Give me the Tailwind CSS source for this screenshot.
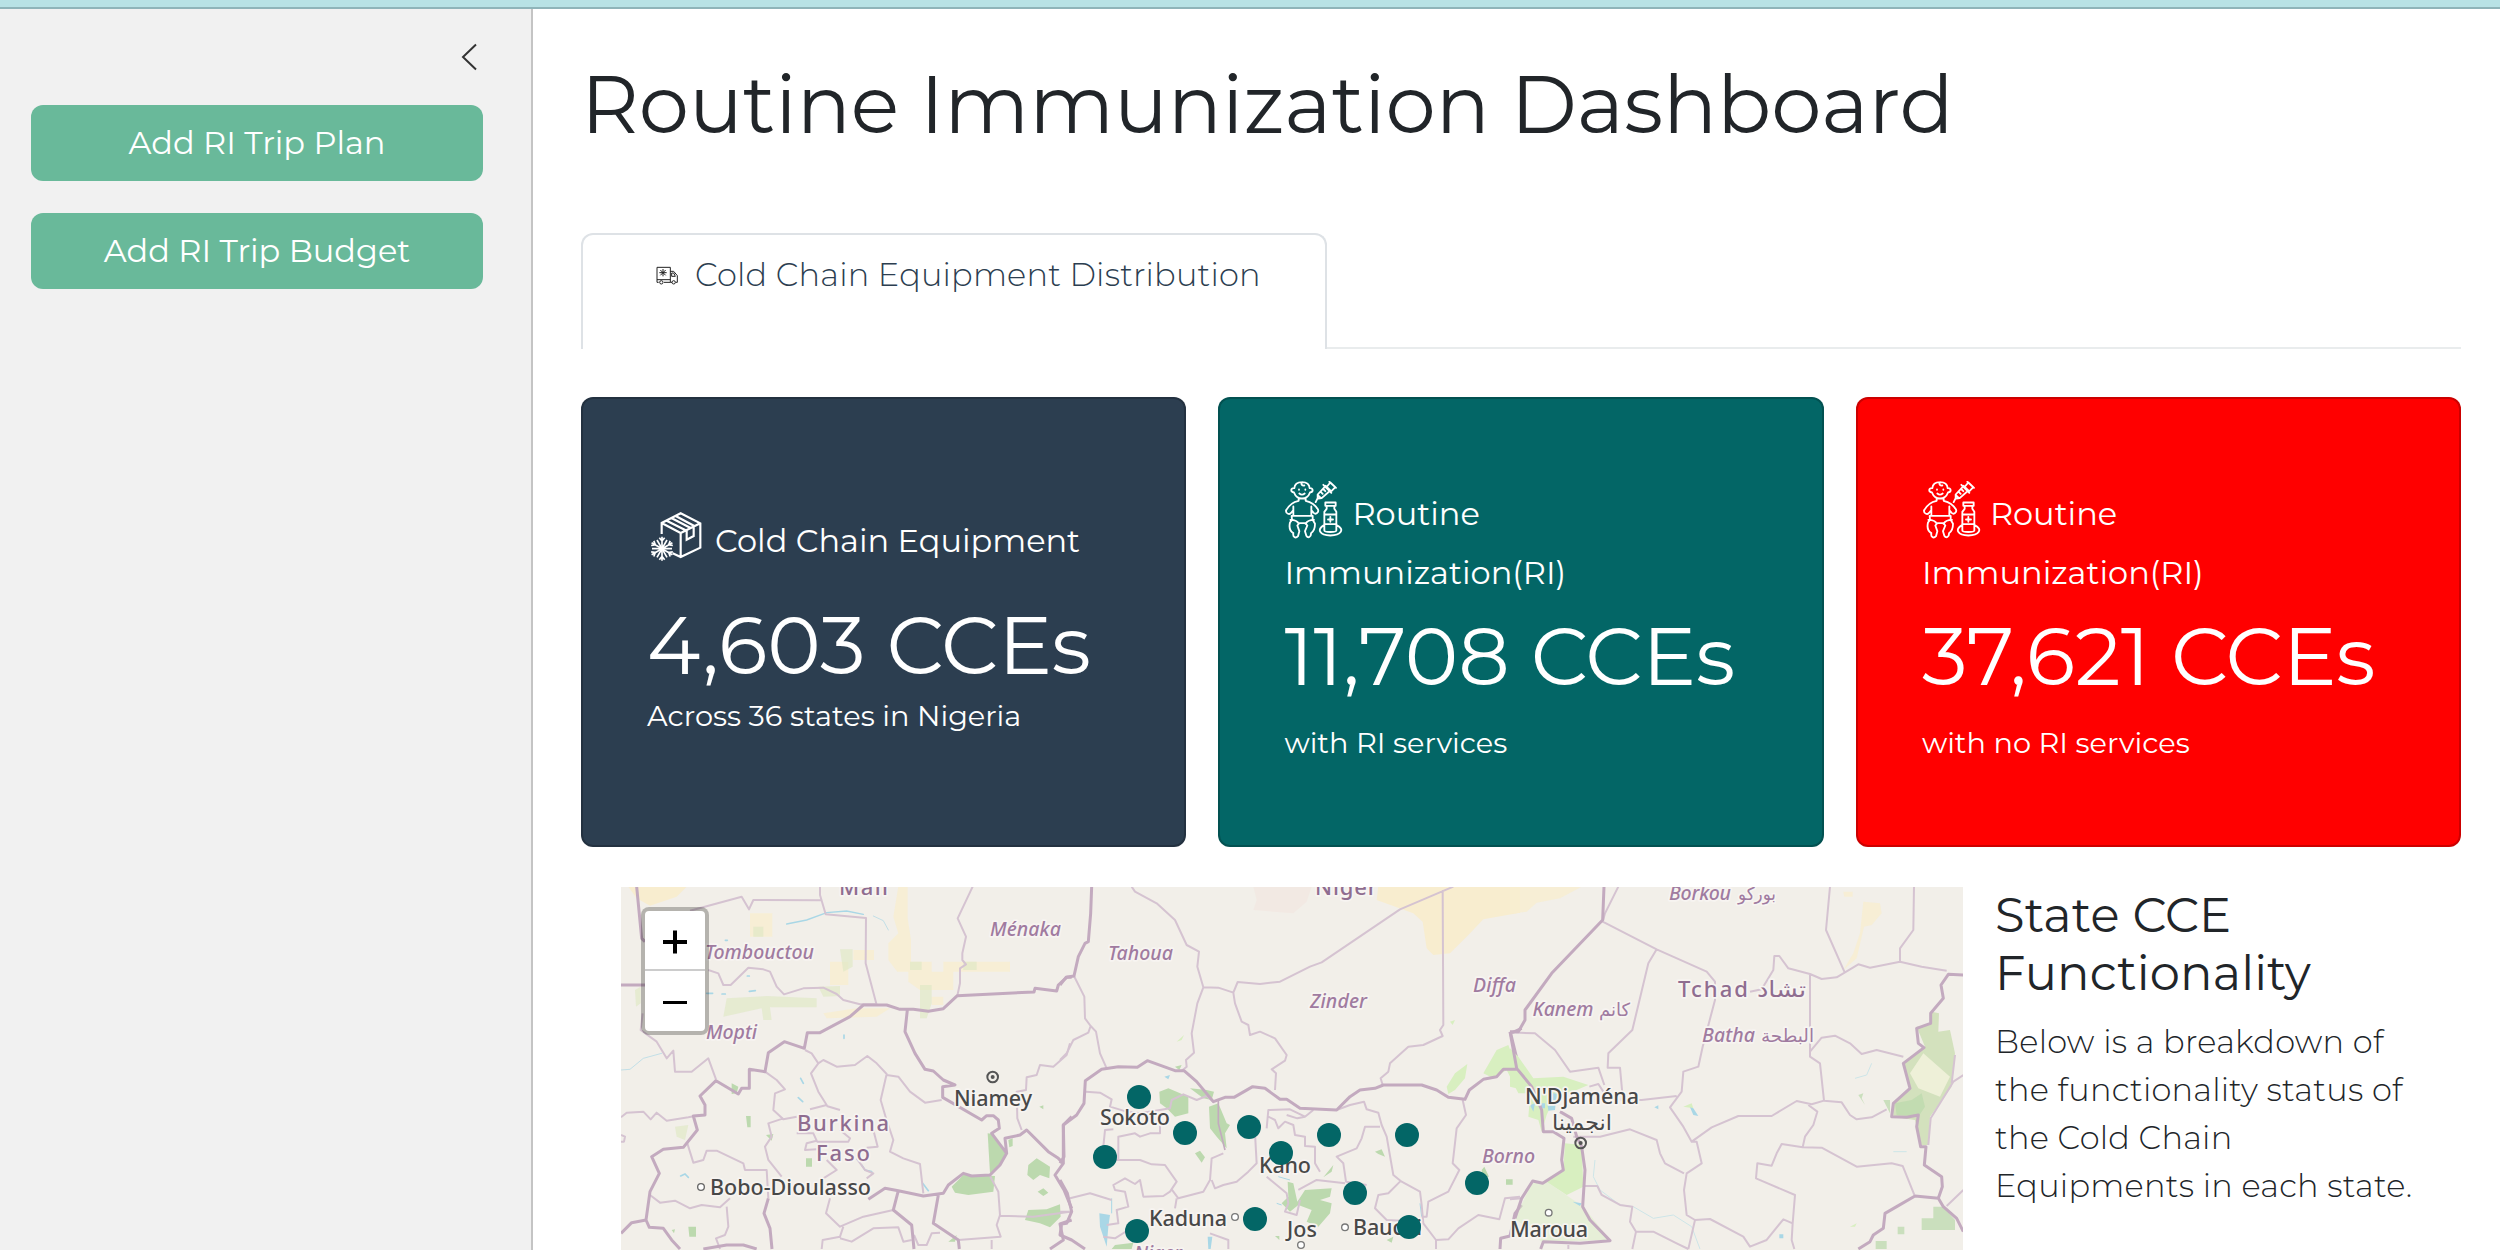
<!DOCTYPE html>
<html lang="en">
<head>
<meta charset="utf-8">
<title>Routine Immunization Dashboard</title>
<script src="https://cdn.jsdelivr.net/npm/@tailwindcss/browser@4"></script>
</head>
<body class="h-[1250px] w-[2500px] overflow-hidden bg-white font-[Montserrat,Inter,sans-serif] text-[#212529]">
<div class="flex h-full flex-col">
  <header class="h-[9px] shrink-0 border-b-2 border-[#8fb4b9] bg-[#b8e2e5]"></header>
  <div class="flex min-h-0 flex-1">
    <aside class="flex w-[533px] shrink-0 flex-col border-r-2 border-[#c4c4c4] bg-[#f1f1f1] pl-[31px] pr-[48px] pt-[34px]">
      <svg class="mr-[6px] h-[28px] w-[16px] self-end" viewBox="0 0 16 28" fill="none" stroke="#333" stroke-width="2"><path d="M15 1.500 2 14l13 12.500"/></svg>
      <button class="mt-[34px] h-[76px] rounded-xl bg-[#69b99a] text-[32px] text-white">Add RI Trip Plan</button>
      <button class="mt-8 h-[76px] rounded-xl bg-[#69b99a] text-[32px] text-white">Add RI Trip Budget</button>
    </aside>
    <main class="flex min-w-0 flex-1 flex-col pl-12 pr-[39px] pt-12">
      <h1 class="text-[80px] leading-[96px]">Routine Immunization Dashboard</h1>
      <div class="mt-[80px] flex h-[116px]">
        <div class="flex w-[746px] items-start rounded-t-xl border-2 border-b-0 border-[#dee2e6] pl-[72px] pt-[16px]">
          <svg class="mt-[14px] h-[21px] w-6" viewBox="30 28 72 63" fill="none" stroke="#222" stroke-width="3"><path d="M41 80H36V35H76V80H57M76 47H86L97 60V80H92M76 80H81M36 72H76M80 52H86L91 62H80Z"/><circle cx="49" cy="80" r="5"/><circle cx="86" cy="80" r="5"/><path d="M54 40V62M43 51H65M46 43 62 59M62 43 46 59"/></svg>
          <span class="pl-[16px] text-[32px] font-light leading-[48px] tracking-[0.190px] text-[#2c3e50]">Cold Chain Equipment Distribution</span>
        </div>
        <div class="flex-1 border-b-2 border-[#e9eced]"></div>
      </div>
      <section class="mt-[48px] grid h-[450px] shrink-0 grid-cols-3 gap-[32.400px] text-white">
        <article class="rounded-xl border-2 border-black/20 bg-[#2c3e50] pl-[64px] pt-[113px]">
          <div class="flex h-[58px] items-center gap-2 text-[32px]">
            <svg class="h-[58px] w-[60px]" viewBox="21 36 180 174" fill="none" stroke="#fff" stroke-width="6.500"><path d="M65 102V69L122 40 181 70V143L122 171 98 160M65 69 122 99 181 70M122 99V171M80 62 137 91M94 54 152 84M107 48 163 78M140 92V119L161 108V82"/><g id="flake" stroke-width="5"><path id="arm" d="M66 146V110M58 113 66 123 74 113M66 146 81 120"/><use href="#arm" transform="rotate(60 66 146)"/><use href="#arm" transform="rotate(120 66 146)"/><use href="#arm" transform="rotate(180 66 146)"/><use href="#arm" transform="rotate(240 66 146)"/><use href="#arm" transform="rotate(300 66 146)"/></g></svg>
            <span>Cold Chain Equipment</span>
          </div>
          <div class="mt-[27px] text-[80.700px] leading-[96px]">4,603 CCEs</div>
          <div class="mt-px text-[28.800px] leading-[44px]">Across 36 states in Nigeria</div>
        </article>
        <article class="rounded-xl border-2 border-black/20 bg-[#036666] pl-[64px] pt-[82px]">
          <div class="flex h-[66px] items-center gap-2 text-[32px]">
            <svg class="h-[66px] w-[60px]" viewBox="42 31.500 180 198" fill="none" stroke="#fff" stroke-width="5.500" stroke-linejoin="round" stroke-linecap="round"><g id="baby"><path d="M73 53C74 40 83 35 96 35S118 40 119 53C129 52 132 64 120 66C116 77 109 84 96 84S76 77 72 66C60 64 62 52 73 53ZM96 35C92 42 97 46 103 45M87 57V58M106 57V58M88 69Q96 76 104 69M86 84V91C67 95 56 105 48 120C47 130 59 134 64 126L70 119V136H124V119L131 127C139 134 147 124 144 117C136 103 124 95 107 91V84M70 119V108M124 119V108M65 136H128V148L135 160C135 174 133 182 123 188C124 200 114 204 109 196L105 182 112 165 106 158H88L82 165 88 182 84 197C76 205 68 199 70 188C58 181 57 169 60 156L66 148ZM61 148Q82 148 86 160M132 148Q112 148 107 160"/><path d="M137 95 143 83 143 72 167 46 181 60 155 83 145 84M160 43 184 67M171 48 181 36 196 50 185 61M178 34 198 52M153 65 158 70M161 57 166 62M146 76 152 82"/><path d="M166 96H197V106H166ZM170 106V115L163 124V180C163 186 199 186 199 180V124L193 115V106M163 132H199M163 161H199M181 139V154M174 147H189M162 164C139 176 149 195 181 195S226 176 200 164"/></g></svg>
            <span>Routine</span>
          </div>
          <div class="text-[32px] leading-[52px]">Immunization(RI)</div>
          <div class="mt-[9px] text-[80.700px] leading-[96px]">11,708 CCEs</div>
          <div class="mt-[17px] text-[28.800px] leading-[44px]">with RI services</div>
        </article>
        <article class="rounded-xl border-2 border-black/20 bg-[#ff0000] pl-[64px] pt-[82px]">
          <div class="flex h-[66px] items-center gap-2 text-[32px]">
            <svg class="h-[66px] w-[60px]" viewBox="42 31.500 180 198" fill="none" stroke="#fff" stroke-width="5.500" stroke-linejoin="round" stroke-linecap="round"><use href="#baby"/></svg>
            <span>Routine</span>
          </div>
          <div class="text-[32px] leading-[52px]">Immunization(RI)</div>
          <div class="mt-[9px] text-[80.700px] leading-[96px]">37,621 CCEs</div>
          <div class="mt-[17px] text-[28.800px] leading-[44px]">with no RI services</div>
        </article>
      </section>
      <section class="mt-10 flex min-h-0 flex-1 pl-10">
        <div class="relative w-[1342px] shrink-0 overflow-hidden bg-[#f2efe9]">
          <svg class="block h-[363px] w-[1342px]" viewBox="621 887 1342 363" font-family="'Noto Sans','DejaVu Sans',sans-serif">
            <!-- west: Mali, Burkina Faso -->
            <g transform="translate(610 870) scale(.33333)">
              <g fill="#f8edcf"><path d="M55 50H230L200 80 120 107 80 85Z"/><path d="M420 130H487V200H420ZM865 50H893V145L903 210V305H862L835 270V220L865 190 850 140ZM660 275H715V345H660ZM895 275H965V305H1030V360H930L895 335ZM1000 275H1200V305H1000ZM640 430 740 415H840L800 440 650 445ZM730 240H792V270H730ZM965 380H1000V405H965Z" opacity=".8"/></g>
              <g fill="#dfe8c4" opacity=".65"><path d="M690 238H728V290L700 305ZM350 385 470 378 620 385V412H480L485 450H460L455 415 340 440ZM625 350 690 348V378L640 380ZM930 345H965V400L950 445 930 445ZM75 360 92 350V400L78 410ZM430 170H460V200H430ZM900 275H935V300H900ZM1060 275H1100V300H1060ZM195 770 235 765 225 810 200 800Z"/></g>
              <g fill="#bcd9ae"><path d="M1133 790 1148 792 1192 850 1170 888 1140 910Z"/><path d="M1025 950 1060 915 1155 918 1150 965 1075 975 1035 968Z"/><path d="M1255 885 1280 865 1320 890 1318 925 1290 915 1270 930 1252 915ZM1283 965 1300 955 1315 968 1300 978ZM1245 1050 1255 1020 1310 1018 1350 1003 1352 1040 1320 1072 1290 1060ZM235 1070H258V1100H238ZM1015 1115 1040 1095 1035 1115ZM1195 810 1208 805V828L1198 832ZM1288 710 1300 706V718ZM365 640 385 650 380 670 365 672ZM408 738H422V772H412ZM468 795 490 792 485 812ZM588 865H606V890H588ZM185 1080 195 1078 192 1090Z"/></g>
              <g fill="none" stroke="#a9d7e6" stroke-width="5" stroke-linecap="round"><path d="M530 162 590 150 650 128 710 123 760 133" stroke-width="4"/><path d="M790 138 820 152 835 180" stroke-width="2"/><path d="M33 600 60 598 100 565 155 550" stroke-width="2"/><path d="M290 370H308M336 372H346M418 364 436 362M412 318H418M346 211H352M565 683 578 695M212 918 225 912 235 922M755 885 765 900 785 905M938 940 955 962M572 625 580 640M702 495V505"/></g>
              <g fill="none" stroke="#d5c3d1" stroke-width="6" stroke-linejoin="round"><path d="M240 122 395 80 417 118 430 90 635 91M630 50V75L647 133 768 144 767 280 800 405M1088 50 1043 145 1068 200 1057 250V270L1068 283 1050 295V340L1042 377M295 300 325 310 340 345H362L415 293 460 298 480 305 500 350 522 373 580 355 640 353 680 372 700 390 750 403H800M98 430 92 480 140 515 170 565 190 542 195 605 245 605 295 565 318 628M33 742 50 728 100 725 122 748 140 728 170 752 235 742 255 738M465 605 500 630 525 658 495 670 490 720 520 748 560 740M585 540 605 550 625 580 603 610 625 665 650 705 600 718M625 580 640 570 680 590 735 585 772 558 800 580 830 612 812 690 828 745 850 810 840 845 880 865 930 882 940 970M830 615 865 620 900 665 945 698 995 690M650 708 690 720M520 745 475 760 485 800 465 830 475 870 515 920M232 820 250 878 280 870 290 842 320 842 400 880 405 900H470L475 985M560 790 610 790 620 812 590 820 585 840 620 838M690 780 720 805 715 815 620 815M790 780 803 830 770 833M650 870 680 900 640 925M740 865 765 900 790 910 770 925M120 975 150 998 195 992 240 1015 275 1005 330 1012 360 985M350 1010 355 1070 345 1095 318 1105 330 1137M660 985 648 1030 690 1070 760 1040 850 1020M635 1137 638 1110 690 1100 700 1070M690 1105 725 1115 790 1075 865 1072 880 1115 905 1110M1140 918 1165 965 1170 1035 1160 1065 1172 1100 1045 1110M1145 1110V1137M1170 1037 1270 1040 1380 1025M1380 520 1370 555 1330 590 1290 585 1280 615 1250 622 1248 660 1220 665 1222 745 1235 780M33 795 45 800 42 815 33 815M912 1095 925 1125 950 1125 965 1090 990 1088"/></g>
              <g fill="none" stroke="#c3aabf" stroke-width="9" stroke-linejoin="round"><path d="M80 50 95 205 105 215M33 345H110M33 1090 65 1058 108 1050 120 965 148 910 125 860 160 838 220 832 262 780 250 738 285 735V705L270 678 318 632 385 672 395 655H418V598L465 605 475 548 523 515 583 535 592 488H630L720 440 760 405H805L830 405 870 418H910L955 424 1000 416 1042 377 1272 366 1275 355 1340 363 1345 345 1370 322H1385M108 1050 118 1072 160 1075 185 1110 210 1137M892 420 885 485 915 550 945 598 970 603 1000 630 1035 645 998 650V682L1115 750 1130 737H1150L1165 750 1168 775 1145 790 1190 850 1170 885 1140 915 1085 918 1060 910 1015 945 1000 970 940 978 865 962 825 955 775 988M1190 850 1185 805 1230 795 1250 780 1315 845 1345 865 1360 880 1335 915 1362 960 1385 1015M1360 880V765L1385 740M865 962 850 1020 905 1065 912 1137M985 975 970 1060 1045 1110 1048 1137M475 985 462 1030 480 1075 486 1137M280 1137 350 1125H400L440 1137M1385 1050 1350 1062 1360 1110 1320 1137"/></g>
              <circle cx="1148" cy="621" r="16" fill="none" stroke="#555" stroke-width="6"/><circle cx="1148" cy="621" r="6" fill="#555"/><circle cx="273" cy="951" r="10" fill="#fff" stroke="#666" stroke-width="4"/>
            </g>
            <!-- centre: Niger, northern Nigeria -->
            <g transform="translate(1060 870) scale(.33333)">
              <path fill="#f2e9e3" d="M580 50H755L740 95 700 130 580 120 590 90Z"/>
              <path fill="#f8edcf" d="M955 50H1380V128L1270 148 1225 195 1170 250 1120 255 1100 235 1088 155 1060 130 950 90Z"/>
              <g fill="#d8efc0"><path d="M1160 650 1185 610 1222 582 1215 625 1185 660 1165 672ZM1270 610 1310 540 1345 525 1365 580 1400 670 1375 670 1340 600 1300 625ZM350 515 372 495 365 510ZM1170 455 1185 450 1178 465Z"/></g>
              <g fill="#bcd9ae"><path d="M298 665 325 655 385 680 385 730 345 740 320 715 300 700ZM390 655 440 660 462 665 455 690 430 685ZM447 710 475 700 500 760 510 765 495 790 500 835 470 800 450 775ZM405 850 420 842 435 862 425 878ZM683 935 700 940 712 995 735 960 815 955 810 980 780 990 815 1000 810 1030 775 1070 740 1055 755 1020 715 1005 690 1025 665 1000 685 980ZM1265 900 1273 890 1287 920H1268ZM1338 928H1358V944H1338ZM945 845 965 838 975 860 955 852ZM790 922 820 885 815 905ZM155 1137 165 1125 220 1118 215 1137ZM345 590 365 585 358 600ZM645 1098H658V1110ZM980 1110 1000 1100 995 1118Z"/></g>
              <g fill="#a9d7e6"><path d="M118 1030 150 1035 145 1070 140 1130 130 1100 120 1070ZM443 1100H457L452 1137H445ZM313 620 330 615 325 628Z"/></g>
              <g fill="none" stroke="#a9d7e6" stroke-width="3"><path d="M155 985V1030M655 920 690 930M1080 1000 1085 1040M650 1000 665 1005"/></g>
              <g fill="none" stroke="#d5c3d1" stroke-width="6" stroke-linejoin="round"><path d="M215 50 225 65 290 100 345 150 380 225 417 245 412 290 430 352 412 400 395 490 402 548 378 570 380 590 365 602M430 352 475 353 520 368 533 336 600 342 660 335 750 290 785 277 1020 118 1180 50M520 368 525 400 545 455 565 465 570 495 600 485 645 505 680 555 675 572 635 598 648 610 645 660M42 318 73 380 75 445 92 468 108 485 120 550 140 595M92 468 85 488 40 510 20 550 0 570M1148 60 1150 465 1140 480 1148 498 1090 525 1045 530 990 580 985 605 962 625 968 645M78 665 120 668 155 688 150 710 190 722M190 722 240 730 300 720 330 715 335 690 370 673 410 690 440 678 460 695M300 740 300 790 270 790 240 800 225 790 175 800 175 870 135 870 130 830 135 780 160 778M175 870 240 870 275 883 315 885 350 935 330 965 310 978 250 980 240 930 225 942 195 925 160 945 165 960 195 965 205 1010 170 1020 175 1060 140 1065M335 958 355 985 430 965 450 930 455 865 490 850M455 930 465 955 490 945 530 935 565 905 590 880 585 790M350 985 345 1015M620 775 625 720 690 718 735 740 712 745 680 735M625 740 645 750 655 775 675 755 700 765 705 795 735 800 735 828 765 830 765 880 780 905M735 740 760 720M830 720 870 705 912 695 920 718 955 728 965 765 980 800 1000 915 1025 935 1080 965 1085 1005 1090 1060 1128 1110 1165 1108 1195 1075 1255 1035 1318 1048 1335 985 1380 980M960 770 915 770 905 805 890 835 830 860 850 880 858 935 920 945M1208 690 1218 735 1190 775 1178 880 1198 900 1165 965 1105 995 1100 1040 1085 1040M1020 935 985 970 955 975 945 1015 980 1050 1085 1055M620 920 680 970 685 1000 675 1025 710 1035 720 990M715 960 770 930 855 940M0 1025H33M30 985 90 970 155 990M130 1100 165 1105 205 1080M450 1090 505 1110V1137M1128 1110V1137"/></g>
              <g fill="none" stroke="#c3aabf" stroke-width="9" stroke-linejoin="round"><path d="M95 50 92 130 85 215 75 220 55 260 42 318 18 322 0 345M0 880 12 860 10 765 50 735 72 700 76 632 125 598 175 590 232 592 262 572 345 602H372L410 635 460 695 495 682H522L578 650 615 655 660 688H680L720 715 830 720 870 680 900 660 945 655 970 645H1085L1130 660 1165 682 1215 688 1228 660 1270 628 1310 620 1330 598H1375M1380 605 1352 490 1385 475M0 930 22 970 35 1025 20 1060 5 1062 0 1095 35 1110 75 1137M1320 1137 1322 1105 1350 1098 1365 1030 1385 1005"/><path d="M475 690V760L495 840" stroke-width="5"/></g>
              <g fill="#fff" stroke="#777" stroke-width="4"><circle cx="525" cy="1041" r="10"/><circle cx="855" cy="1072" r="10"/><circle cx="723" cy="1125" r="10"/></g>
            </g>
            <!-- east: Chad -->
            <g transform="translate(1510 870) scale(.33333)">
              <path fill="#f8edcf" d="M0 50H215L150 85 80 98 50 125 0 132ZM1000 65H1028V80H1003ZM1060 95 1110 100 1115 130 1085 165 1062 170 1040 265 1000 300 1030 250 1050 190Z" opacity=".8"/>
              <g fill="#d8efc0"><path d="M0 535 25 560 70 625 160 620 235 645 200 660 130 690 110 735 95 785 85 750 55 740 60 680 40 660 0 650ZM165 820 215 825 220 950 170 975 110 935 160 900ZM520 710 545 700 550 715ZM1020 1070 1040 1060 1035 1070Z"/><path d="M65 940 110 935 220 1010 300 1110 95 1115 15 1045Z" opacity=".45"/></g>
              <path fill="#d3e1bd" d="M1220 470 1260 465 1265 425 1287 430 1285 485 1320 480 1335 550 1325 650 1260 740 1255 825 1235 825 1215 750 1150 740 1150 700 1200 660 1180 580 1245 530Z"/>
              <path fill="#eef0d8" d="M1200 610 1240 550 1320 620 1290 680 1225 655Z"/>
              <g fill="#bcd9ae" opacity=".75"><path d="M1155 700 1205 690 1235 670 1245 710 1225 740 1160 735ZM1120 690H1140V730ZM1045 675 1060 670 1055 685 1065 705ZM1163 1070H1183V1093H1163ZM1097 1113H1130V1137H1097ZM1270 1010H1300L1335 1050V1080H1235V1045H1270Z"/></g>
              <g fill="#a9d7e6"><path d="M60 705 75 700 70 725ZM115 665 140 672 135 720 115 722 112 700ZM90 700H105V715H90ZM540 712 550 715 565 738 550 735ZM433 712 445 706V718ZM188 995 215 1000 210 1008ZM808 1093H820V1105H808Z"/></g>
              <path fill="none" stroke="#cde5e8" stroke-width="3" d="M255 870 250 920 270 960 330 1005 370 1010 430 1045 490 1035 545 1070 570 1137M1150 845H1190M1085 580 1070 615 1035 625"/>
              <g fill="none" stroke="#d5c3d1" stroke-width="6" stroke-linejoin="round"><path d="M325 50 285 130 278 155 440 238 590 305 615 335 615 390 578 530 565 590 520 605 515 665 480 712 520 770 545 815 560 815 575 880 530 910 522 960 530 1035 555 1050 535 1137M440 238 415 280 367 480 295 550 293 593H330L337 670 335 690 395 690 500 678M960 50 948 180 1003 305M1212 50 1210 180 1170 235V275M720 365 755 358 790 300 793 258 808 258 835 295 900 312 935 327 980 322 1045 283 1080 293 1170 275 1235 290 1310 302M900 312V560L930 580 942 692 995 697 1020 735 1040 748 1085 742 1130 718M900 545 935 503 975 497 1020 520 1055 552 1100 540 1180 560M545 815 605 772 685 738H785L860 693 905 703 942 692M895 705 922 725 910 765 885 800 878 832 815 822 800 850 785 887 742 880 738 925 855 975 848 1060 820 1048 770 1110 720 1130 700 1100 600 1047 555 1050M848 1060 845 1110 853 1137M878 832 935 833 1040 890 1145 880 1178 888 1213 975M0 487 75 490 135 540 180 605 265 593 283 645M190 800 270 800 360 778 440 810 450 850 465 880 522 910M220 948H262L275 975 330 1005 367 1010 360 1055 378 1085H430L500 1120 535 1137M378 1085 367 1137M1360 615 1330 635 1290 700 1262 745 1255 825M1310 1008 1360 960M1335 555 1325 640M238 650 265 642 280 665M0 988 35 985M175 1125V1137"/></g>
              <g fill="none" stroke="#c3aabf" stroke-width="9" stroke-linejoin="round"><path d="M282 50 278 150 125 310 45 420V450L25 485H0M0 485 20 595 65 650 95 720 100 785 130 785 162 805 155 870 160 900 98 940 68 933 35 985 15 1045M0 598H22M150 725 185 745 200 800 215 830 225 900 218 1010 240 1050 300 1112 210 1120 100 1115 92 1137M1360 315 1315 313 1293 345 1300 385 1262 430V460L1220 475 1225 520 1242 533 1180 580 1200 655 1150 700 1145 740 1190 742 1225 735 1220 770 1232 830H1248L1243 885 1295 920 1297 950 1285 985 1215 978 1160 1010 1125 1030 1120 1075 1090 1095 1080 1115 1045 1137M1285 985 1300 1010 1340 1045 1360 1085"/></g>
              <circle cx="212" cy="819" r="16" fill="none" stroke="#555" stroke-width="6"/><circle cx="212" cy="819" r="6" fill="#555"/><circle cx="116" cy="1028" r="10" fill="#fff" stroke="#777" stroke-width="4"/>
            </g>
            <!-- place names -->
            <g paint-order="stroke" stroke="#f7f4f1" stroke-width="3.500" stroke-linejoin="round">
              <g fill="#8f6d90" font-size="22" font-weight="500">
                <text x="839" y="894.500" textLength="49">Mali</text>
                <text x="1315" y="894.500" textLength="62">Niger</text>
                <text x="797" y="1130.500" textLength="92">Burkina</text>
                <text x="816" y="1160.500" textLength="54">Faso</text>
                <text x="1678" y="996.500" textLength="70">Tchad</text>
                <text x="1757" y="996.500" textLength="49" lengthAdjust="spacingAndGlyphs">تشاد</text>
              </g>
              <g fill="#a07ba0" font-size="19.500" font-weight="500" font-style="italic">
                <text x="705" y="958.500" textLength="109">Tombouctou</text>
                <text x="706" y="1038.500" textLength="51">Mopti</text>
                <text x="990" y="935.500" textLength="71">Ménaka</text>
                <text x="1108" y="959.500" textLength="65">Tahoua</text>
                <text x="1310" y="1007.500" textLength="57">Zinder</text>
                <text x="1473" y="991.500" textLength="43">Diffa</text>
                <text x="1482" y="1162.500" textLength="53">Borno</text>
                <text x="1134" y="1259.500" textLength="48">Niger</text>
                <text x="1669" y="899.500" textLength="62">Borkou</text>
                <text x="1532.500" y="1015.500" textLength="61">Kanem</text>
                <text x="1702" y="1041.500" textLength="53">Batha</text>
                <g font-style="normal" font-size="18">
                  <text x="1738" y="899.500" textLength="38" lengthAdjust="spacingAndGlyphs">بوركو</text>
                  <text x="1599" y="1015.500" textLength="31" lengthAdjust="spacingAndGlyphs">كانم</text>
                  <text x="1761" y="1041.500" textLength="53" lengthAdjust="spacingAndGlyphs">البطحة</text>
                </g>
              </g>
              <g fill="#484848" font-size="21.500" font-weight="500">
                <text x="954" y="1106" textLength="78">Niamey</text>
                <text x="710" y="1195" textLength="161">Bobo-Dioulasso</text>
                <text x="1100" y="1124.500" textLength="70">Sokoto</text>
                <text x="1259" y="1172.500" textLength="52">Kano</text>
                <text x="1149" y="1226" textLength="78">Kaduna</text>
                <text x="1287" y="1237" textLength="30">Jos</text>
                <text x="1353" y="1234.500" textLength="69">Bauchi</text>
                <text x="1510" y="1237" textLength="78">Maroua</text>
                <text x="1525" y="1103.500" textLength="114">N'Djaména</text>
                <text x="1552" y="1130" textLength="60" lengthAdjust="spacingAndGlyphs">انجمينا</text>
              </g>
            </g>
            <!-- equipment markers -->
            <g fill="#036666">
              <circle cx="1139" cy="1097" r="12"/><circle cx="1185" cy="1133" r="12"/><circle cx="1105" cy="1157" r="12"/><circle cx="1249" cy="1127" r="12"/><circle cx="1281" cy="1153" r="12"/><circle cx="1329" cy="1135" r="12"/><circle cx="1407" cy="1135" r="12"/><circle cx="1477" cy="1183" r="12"/><circle cx="1355" cy="1193" r="12"/><circle cx="1255" cy="1219" r="12"/><circle cx="1137" cy="1231" r="12"/><circle cx="1409" cy="1227" r="12"/>
            </g>
          </svg>
          <div class="absolute left-[20px] top-[20px] flex h-[128px] w-[68px] flex-col rounded-lg border-4 border-black/25 bg-white bg-clip-padding">
            <div class="flex h-[60px] items-center justify-center border-b-2 border-[#ccc] pt-[4px]"><svg class="h-6 w-6" viewBox="0 0 24 24" stroke="#000" stroke-width="4"><path d="M0 12H24M12 .5V23.500"/></svg></div>
            <div class="flex flex-1 items-center justify-center"><svg class="h-6 w-6" viewBox="0 0 24 24" stroke="#000" stroke-width="3"><path d="M0 13.500H24"/></svg></div>
          </div>
        </div>
        <div class="min-w-0 flex-1 pl-8">
          <h2 class="text-[48px] leading-[57.600px] tracking-[0.150px]">State CCE<br>Functionality</h2>
          <p class="mt-4 text-[32px] font-light leading-[48px] tracking-[0.240px]">Below is a breakdown of<br>the functionality status of<br>the Cold Chain<br>Equipments in each state.</p>
        </div>
      </section>
    </main>
  </div>
</div>
</body>
</html>
